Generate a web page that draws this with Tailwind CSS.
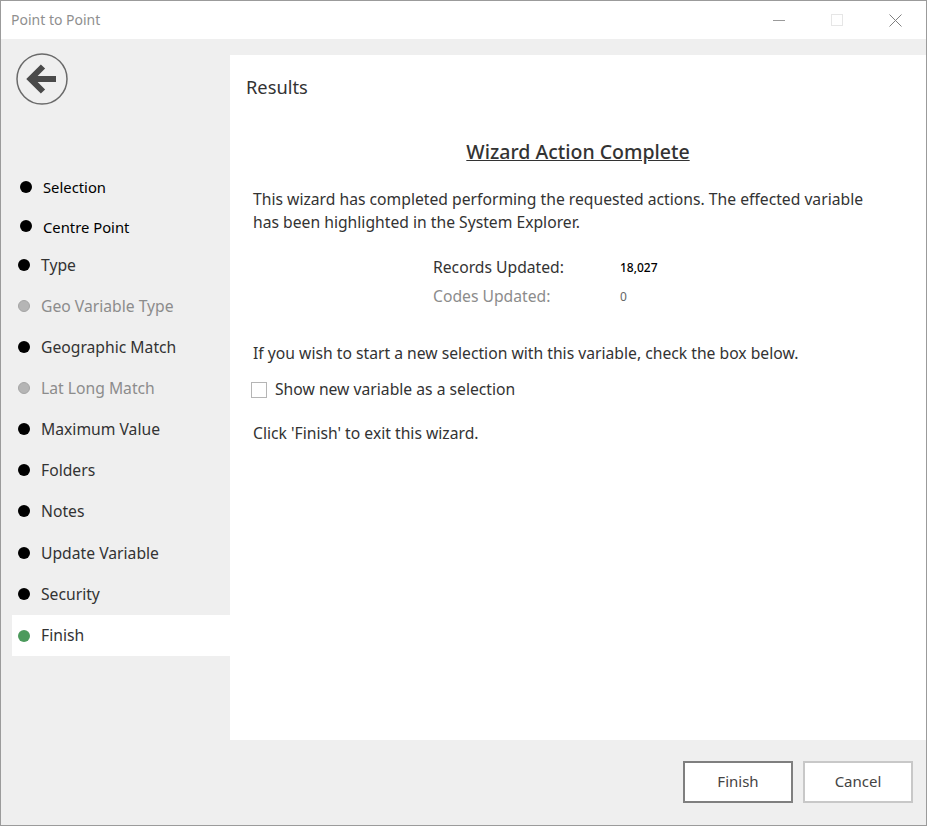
<!DOCTYPE html>
<html lang="en">
  <head>
    <meta charset="UTF-8" />
    <title>Point to Point</title>
    <script src="https://cdn.jsdelivr.net/npm/@tailwindcss/browser@4"></script>
  </head>
  <body class="bg-white">
    <div class="w-[927px] h-[826px] flex flex-col border border-[#9b9b9b] bg-[#efefef] font-['Noto_Sans','Open_Sans',sans-serif] text-[15.7px] text-[#333]">
      <!-- Title bar -->
      <div class="h-[38px] shrink-0 bg-white flex items-center justify-between">
        <span class="pl-[10px] pb-[2px] text-[#8f8f8f] text-[14px]">Point to Point</span>
        <div class="flex items-center gap-[46px] pr-[24px]">
          <svg width="12" height="12" viewBox="0 0 12 12"><path d="M0 6.5h12" stroke="#9a9a9a" /></svg>
          <svg width="12" height="12" viewBox="0 0 12 12"><rect x="0.5" y="0.5" width="11" height="11" fill="none" stroke="#e6e6e6" /></svg>
          <svg width="13" height="13" viewBox="0 0 13 13"><path d="M0.5 0.5l12 12M12.5 0.5l-12 12" stroke="#808080" /></svg>
        </div>
      </div>

      <div class="flex flex-1 pt-4 min-h-0">
        <!-- Sidebar -->
        <div class="w-[229px] shrink-0 flex flex-col">
          <div class="pl-[15px] h-[111px] -mt-[2px] mb-[2px]">
            <svg width="52" height="52" viewBox="0 0 52 52">
              <circle cx="26" cy="26" r="25" fill="none" stroke="#6a6a6a" stroke-width="1.5" />
              <path d="M40 26H16M27 13.5L14.5 26L27 38.5" fill="none" stroke="#4a4a4a" stroke-width="6" />
            </svg>
          </div>
          <div class="flex flex-col">
            <div class="h-[41px] flex items-center pl-[19px] gap-[11px] text-black text-[14.8px]"><span class="w-3 h-3 rounded-full bg-black"></span><span class="pt-[1px]">Selection</span></div>
            <div class="h-[38px] -mb-[1px] flex items-center pl-[19px] gap-[11px] text-black text-[14.8px]"><span class="w-3 h-3 rounded-full bg-black"></span><span class="pt-[2px]">Centre Point</span></div>
            <div class="h-[41px] flex items-center pl-[17px] gap-[11px]"><span class="w-3 h-3 rounded-full bg-black"></span><span class="pt-[2px]">Type</span></div>
            <div class="h-[41px] flex items-center pl-[17px] gap-[11px] text-[#8c8c8c]"><span class="w-3 h-3 rounded-full bg-[#b5b5b5] border border-[#a5a5a5]"></span><span class="pt-[2px]">Geo Variable Type</span></div>
            <div class="h-[41px] flex items-center pl-[17px] gap-[11px]"><span class="w-3 h-3 rounded-full bg-black"></span><span class="pt-[2px]">Geographic Match</span></div>
            <div class="h-[41px] flex items-center pl-[17px] gap-[11px] text-[#8c8c8c]"><span class="w-3 h-3 rounded-full bg-[#b5b5b5] border border-[#a5a5a5]"></span><span class="pt-[2px]">Lat Long Match</span></div>
            <div class="h-[41px] flex items-center pl-[17px] gap-[11px]"><span class="w-3 h-3 rounded-full bg-black"></span><span class="pt-[2px]">Maximum Value</span></div>
            <div class="h-[41px] flex items-center pl-[17px] gap-[11px]"><span class="w-3 h-3 rounded-full bg-black"></span><span class="pt-[2px]">Folders</span></div>
            <div class="h-[41px] flex items-center pl-[17px] gap-[11px]"><span class="w-3 h-3 rounded-full bg-black"></span><span class="pt-[2px]">Notes</span></div>
            <div class="h-[41px] mt-[1px] flex items-center pl-[17px] gap-[11px]"><span class="w-3 h-3 rounded-full bg-black"></span><span class="pt-[2px]">Update Variable</span></div>
            <div class="h-[41px] flex items-center pl-[17px] gap-[11px]"><span class="w-3 h-3 rounded-full bg-black"></span><span class="pt-[2px]">Security</span></div>
            <div class="h-[41px] mt-[1px] ml-[11px] bg-white flex items-center pl-[6px] gap-[11px]"><span class="w-3 h-3 rounded-full bg-[#4c9a5c]"></span><span>Finish</span></div>
          </div>
        </div>

        <!-- Content -->
        <div class="flex-1 h-[685px] bg-white">
          <h2 class="pt-[19px] pl-[16px] text-[18.3px] leading-[25px]">Results</h2>
          <h1 class="mt-[40px] text-center text-[19.5px] leading-[25px] font-medium underline">Wizard Action Complete</h1>
          <div class="pl-[23px] pr-[60px]">
            <p class="mt-[24px] leading-[23px]">This wizard has completed performing the requested actions. The effected variable has been highlighted in the System Explorer.</p>
            <div class="mt-[23px] pl-[180px] grid grid-cols-[187px_1fr] gap-y-[8px] leading-[21px]">
              <span>Records Updated:</span><span class="text-[12px] font-medium text-black">18,027</span>
              <span class="text-[#8c8c8c]">Codes Updated:</span><span class="text-[12px] text-[#666]">0</span>
            </div>
            <p class="mt-[35px] leading-[23px]">If you wish to start a new selection with this variable, check the box below.</p>
            <label class="mt-[13px] -ml-[2px] flex items-center gap-[8px] leading-[23px]">
              <span class="w-4 h-4 bg-white border border-[#b5b5b5]"></span>
              Show new variable as a selection
            </label>
            <p class="mt-[21px] leading-[23px]">Click 'Finish' to exit this wizard.</p>
          </div>
        </div>
      </div>

      <!-- Footer -->
      <div class="h-[85px] shrink-0 flex justify-end items-start gap-[10px] pt-[21px] pr-[13px] text-[15px]">
        <button class="w-[110px] h-[42px] pb-[2px] bg-white border-2 border-[#7f7f7f] text-[#444]">Finish</button>
        <button class="w-[110px] h-[42px] pb-[2px] bg-white border-2 border-[#c8c8c8] text-[#444]">Cancel</button>
      </div>
    </div>
  </body>
</html>
